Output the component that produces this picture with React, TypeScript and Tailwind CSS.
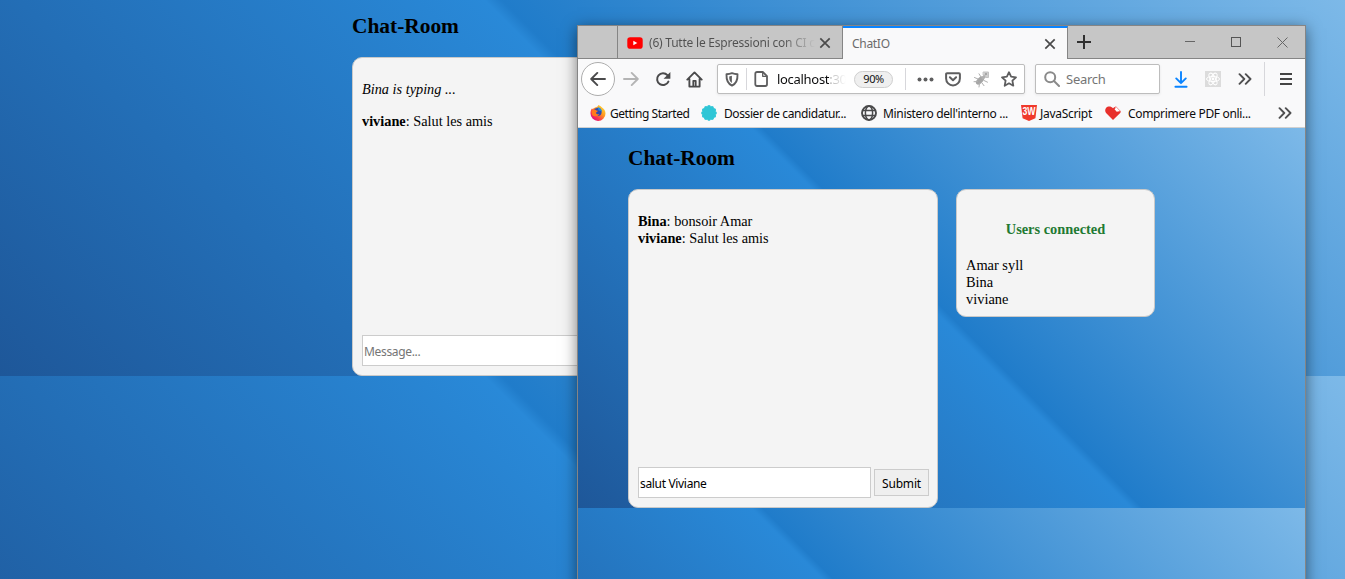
import React from "react";

const GRADIENT =
  "bg-[linear-gradient(45deg,#1e5799_0%,#2989d8_50%,#207cca_51%,#7db9e8_100%)]";

const UI = "font-['Noto_Sans','Open_Sans',sans-serif]";

function CloseIcon() {
  return (
    <svg width="12" height="12" viewBox="0 0 12 12" fill="none" stroke="#4a4a4a" strokeWidth="1.7">
      <path d="M1.3 1.3l9.4 9.4M10.7 1.3L1.3 10.7" />
    </svg>
  );
}

function YoutubeIcon() {
  return (
    <svg width="16" height="12" viewBox="0 0 16 12">
      <rect x="0.3" y="0.3" width="15.4" height="11.4" rx="2.8" fill="#f00" />
      <path d="M6.3 3.8v4.400L10.300 6z" fill="#fff" />
    </svg>
  );
}

function BackIcon() {
  return (
    <svg width="16" height="16" viewBox="0 0 16 16" fill="none" stroke="#4a4a4b" strokeWidth="1.9" strokeLinecap="round" strokeLinejoin="round">
      <path d="M15 8H1.4M7.3 1.9L1.2 8l6.1 6.1" />
    </svg>
  );
}

function ForwardIcon() {
  return (
    <svg width="16" height="16" viewBox="0 0 16 16" fill="none" stroke="#b4b4b4" strokeWidth="1.9" strokeLinecap="round" strokeLinejoin="round">
      <path d="M1 8h13.6M8.7 1.9L14.8 8l-6.1 6.1" />
    </svg>
  );
}

function ReloadIcon() {
  return (
    <svg width="16" height="16" viewBox="0 0 16 16">
      <path d="M12.4 4.2A5.9 5.9 0 1 0 13.4 10.6" fill="none" stroke="#4a4a4b" strokeWidth="2" strokeLinecap="round" />
      <path d="M15.4 1v6.2a.6.6 0 0 1-.6.6H8.6z" fill="#4a4a4b" />
    </svg>
  );
}

function HomeIcon() {
  return (
    <svg width="17" height="17" viewBox="0 0 17 17" fill="none" stroke="#4a4a4b" strokeWidth="1.9" strokeLinecap="round" strokeLinejoin="round">
      <path d="M1.3 8.6L8.5 1.4l7.2 7.2M3.4 8v7.6h10.2V8" />
      <path d="M7.3 15.2V9.8h2.4v5.4" strokeWidth="1.8" />
    </svg>
  );
}

function ShieldIcon() {
  return (
    <svg width="14" height="15" viewBox="0 0 14 15">
      <path d="M7 1.2C5 1.9 3 2.2 1.5 2.3c-.2 4.500 .1 8.900 5.500 11.300 5.400-2.400 5.700-6.800 5.500-11.300C11 2.200 9 1.900 7 1.200z" fill="none" stroke="#5e5e5f" strokeWidth="1.9" strokeLinejoin="round" />
      <path d="M6.900 3.800v7.200C4.500 9.500 4.200 7.400 4.200 4.500z" fill="#5e5e5f" />
    </svg>
  );
}

function PageIcon() {
  return (
    <svg width="14" height="16" viewBox="0 0 14 16" fill="none" stroke="#5e5e5f" strokeWidth="1.8" strokeLinejoin="round">
      <path d="M3 1h5.800L13 5.200V13.300a1.700 1.700 0 0 1-1.700 1.700H3a1.700 1.700 0 0 1-1.700-1.700V2.700A1.700 1.700 0 0 1 3 1z" />
      <path d="M8.700 1.200v4.100h4.100" strokeWidth="1.300" />
    </svg>
  );
}

function DotsIcon() {
  return (
    <svg width="17" height="5" viewBox="0 0 17 5" fill="#5e5e5f">
      <circle cx="2.500" cy="2.500" r="2" />
      <circle cx="8.500" cy="2.500" r="2" />
      <circle cx="14.500" cy="2.500" r="2" />
    </svg>
  );
}

function PocketIcon() {
  return (
    <svg width="16" height="15" viewBox="0 0 16 15" fill="none" stroke="#5e5e5f" strokeWidth="2" strokeLinecap="round" strokeLinejoin="round">
      <path d="M2 1.300h12a.9.900 0 0 1 .9.900V6.500a6.900 6.900 0 0 1-13.800 0V2.200A.9.900 0 0 1 2 1.300z" />
      <path d="M4.900 5.300L8 8.300l3.100-3" />
    </svg>
  );
}

function BugIcon() {
  return (
    <svg width="17" height="17" viewBox="0 0 17 17" fill="none" stroke="#b0b0b0" strokeLinecap="round">
      <ellipse cx="7" cy="9.500" rx="5" ry="2.800" transform="rotate(-45 7 9.500)" fill="#a6a6a6" stroke="none" />
      <path d="M10 7l2.500-3" strokeWidth="3" />
      <path d="M5 8L1.500 6.500M4.500 10.500L1 10.700M8 6L6 2.800M9 12l2 2.700M11 9.500l3.500 1.700M6.500 12.500L6 16" strokeWidth="1" />
      <path d="M10.500 1h5v5.500h-3V4h-2z" fill="#cfcfcf" stroke="#c2c2c2" strokeWidth="1" />
      <path d="M12.500 3h1" stroke="#777" strokeWidth="1" />
    </svg>
  );
}

function StarIcon() {
  return (
    <svg width="16" height="16" viewBox="0 0 16 16" fill="none" stroke="#5e5e5f" strokeWidth="1.800" strokeLinejoin="round">
      <path d="M8 1.200l2.100 4.500 4.900.6-3.600 3.400.9 5L8 12.300 3.700 14.700l.9-5L1 6.300l4.900-.6z" />
    </svg>
  );
}

function SearchIcon() {
  return (
    <svg width="16" height="16" viewBox="0 0 16 16" fill="none" stroke="#8a8a8a" strokeWidth="2" strokeLinecap="round">
      <circle cx="6.200" cy="6.200" r="5" />
      <path d="M10 10l5 5" />
    </svg>
  );
}

function DownloadIcon() {
  return (
    <svg width="14" height="17" viewBox="0 0 14 17" fill="none" stroke="#0a84ff" strokeWidth="1.900" strokeLinecap="round" strokeLinejoin="round">
      <path d="M7 1v11M2.200 7.400L7 12.200l4.800-4.800M1.400 15.700h11.200" />
    </svg>
  );
}

function ReactBadge() {
  return (
    <svg width="16" height="16" viewBox="0 0 16 16">
      <rect width="16" height="16" fill="#dcdcdc" />
      <g fill="none" stroke="#fff" strokeWidth="1">
        <ellipse cx="8" cy="8" rx="6.500" ry="2.600" />
        <ellipse cx="8" cy="8" rx="6.500" ry="2.600" transform="rotate(60 8 8)" />
        <ellipse cx="8" cy="8" rx="6.500" ry="2.600" transform="rotate(120 8 8)" />
      </g>
      <circle cx="8" cy="8" r="1.400" fill="#fff" />
    </svg>
  );
}

function ChevronsIcon() {
  return (
    <svg width="14" height="12" viewBox="0 0 14 12" fill="none" stroke="#4f4f50" strokeWidth="1.900" strokeLinecap="round" strokeLinejoin="round">
      <path d="M1.500 1.200L6.300 6l-4.800 4.800M7.700 1.200L12.500 6l-4.800 4.800" />
    </svg>
  );
}

function MenuIcon() {
  return (
    <svg width="12" height="12" viewBox="0 0 12 12" fill="#444">
      <rect width="12" height="2" />
      <rect y="5" width="12" height="2" />
      <rect y="10" width="12" height="2" />
    </svg>
  );
}

function FirefoxIcon() {
  return (
    <svg width="16" height="16" viewBox="0 0 16 16">
      <defs>
        <linearGradient id="fox" x1="0.9" y1="0.1" x2="0.2" y2="0.9">
          <stop offset="0" stopColor="#ffd93b" />
          <stop offset="0.4" stopColor="#ff9a1f" />
          <stop offset="0.75" stopColor="#fb3d4a" />
          <stop offset="1" stopColor="#e0107c" />
        </linearGradient>
      </defs>
      <path d="M8.500 0c1.500 .8 2.900 1.700 3.800 2.800 1.700 1 3.200 3.200 3.200 5.600A7.500 7.500 0 0 1 .5 8.500C.4 6.400 1 4.500 2.100 3.200l.4 1C4 2.400 6.500 2.500 7.500 1.500z" fill="url(#fox)" />
      <circle cx="7.600" cy="7" r="4" fill="#2f49b0" />
      <path d="M7.500 2c3 .5 4.500 2.500 4.300 5.300-.8-1.500-2-1.800-3-1.500z" fill="#1f8fe0" />
      <path d="M1.600 6.500c1.500-2.300 3.600-2.300 4.700-1l1.500.3c-.2 1.200-1.500 1.200-1.800 1.900 0 1.300 1.700 2 3.300 1.200-1 2.600-5.500 3.300-7.200 .8z" fill="#ff7a1c" />
    </svg>
  );
}

function GearBadge() {
  const teeth = Array.from({ length: 12 }, (_, i) => {
    const a = (i * Math.PI) / 6;
    return [8 + 6.100 * Math.cos(a), 8 + 6.100 * Math.sin(a)];
  });
  return (
    <svg width="16" height="16" viewBox="0 0 16 16" fill="#2fc6d6">
      <circle cx="8" cy="8" r="6.800" />
      {teeth.map(([x, y], i) => (
        <circle key={i} cx={x} cy={y} r="1.800" />
      ))}
    </svg>
  );
}

function GlobeIcon() {
  return (
    <svg width="16" height="16" viewBox="0 0 16 16" fill="none" stroke="#4a4a4b" strokeWidth="1.500">
      <circle cx="8" cy="8" r="7" strokeWidth="1.900" />
      <ellipse cx="8" cy="8" rx="3.600" ry="7" />
      <path d="M1.500 5.500h13M1.500 10.500h13" />
    </svg>
  );
}

function W3Icon() {
  return (
    <svg width="16" height="16" viewBox="0 0 16 16">
      <path d="M0 0h16l-1.600 13.300L8 16l-6.400-2.700z" fill="#f0392b" />
      <text x="8" y="9.800" textAnchor="middle" textLength="13" lengthAdjust="spacingAndGlyphs" fontFamily="Liberation Sans" fontWeight="bold" fontSize="11" fill="#fff">3W</text>
    </svg>
  );
}

function HeartIcon() {
  return (
    <svg width="16" height="14" viewBox="0 0 16 14">
      <path d="M8 14L1.300 7.300C-.8 5 .2 1.200 3.300.5 5 .1 6.700.8 8 2.200L9.500 1 L15.700 5.600c0 .9-.4 1.500-1 2z" fill="#e8302c" />
      <path d="M10.800.5l4.700 4.800-3.800 .8-2.200-2.600z" fill="#fff" stroke="#e8302c" strokeWidth=".5" />
    </svg>
  );
}

function TabStrip() {
  return (
    <div className="flex h-[33px] bg-[#c6c6c6] text-[12px]">
      <div className="w-[39px] shrink-0 border-b border-[#858585]" />
      <div className="flex w-[226px] shrink-0 items-center border-x border-b border-[#858585] pt-px pl-[9px]">
        <YoutubeIcon />
        <span className="ml-[6px] w-[166px] shrink-0 bg-[linear-gradient(90deg,#505050_80%,transparent_100%)] bg-clip-text pt-px text-[12px] tracking-[-0.22px] whitespace-nowrap text-transparent">
          (6) Tutte le Espressioni con CI c
        </span>
        <span className="ml-[4px]"><CloseIcon /></span>
      </div>
      <div className="flex w-[225px] shrink-0 items-center justify-between border-t-2 border-r border-t-[#0a84ff] border-r-[#858585] bg-[#f9f9fa] pr-[11px] pl-[9px]">
        <span className="text-[12px] tracking-[-0.3px] text-[#6b6b6b]">ChatIO</span>
        <CloseIcon />
      </div>
      <div className="flex flex-1 items-center border-b border-[#858585] pl-[9px]">
        <svg width="14" height="14" viewBox="0 0 14 14" fill="none" stroke="#303030" strokeWidth="2">
          <path d="M7 0v14M0 7h14" />
        </svg>
        <div className="ml-[94px] flex flex-1 items-center gap-[36px]">
          <svg width="10" height="10" viewBox="0 0 10 10" stroke="#666"><path d="M0 4.500h10" /></svg>
          <svg width="10" height="10" viewBox="0 0 10 10" stroke="#555" fill="none"><rect x=".5" y=".5" width="9" height="9" /></svg>
          <svg width="11" height="11" viewBox="0 0 11 11" stroke="#666" fill="none"><path d="M.5 .5l10 10M10.500 .5l-10 10" /></svg>
        </div>
      </div>
    </div>
  );
}

function Toolbar() {
  return (
    <div className="flex h-[40px] items-center pl-[3px]">
      <div className="flex h-[34px] w-[34px] shrink-0 items-center justify-center rounded-full border border-[#adadad] bg-white">
        <BackIcon />
      </div>
      <div className="ml-[8px] flex items-center">
        <ForwardIcon />
        <span className="ml-[16px]"><ReloadIcon /></span>
        <span className="ml-[15px]"><HomeIcon /></span>
      </div>
      <div className="ml-[14px] flex h-[30px] w-[308px] shrink-0 items-center rounded-[2px] border border-[#bdbdbd] bg-white pl-[7px] shadow-[0_1px_3px_rgba(0,0,0,0.08)]">
        <ShieldIcon />
        <div className="ml-[7px] h-[22px] w-px bg-[#d7d7db]" />
        <span className="ml-[7px]"><PageIcon /></span>
        <span className="ml-[9px] w-[69px] shrink-0 bg-[linear-gradient(90deg,#0c0c0d_0_52px,#aaa_52px,transparent_100%)] bg-clip-text pt-[2px] text-[13px] tracking-[-0.3px] whitespace-nowrap text-transparent">
          localhost:30
        </span>
        <div className="ml-[8px] flex h-[17px] w-[39px] shrink-0 items-center justify-center rounded-full border border-[#cfcfcf] bg-[#efefef] pt-px text-[11px] tracking-[-0.4px] text-[#111]">
          90%
        </div>
        <div className="ml-[12px] h-[22px] w-px bg-[#d7d7db]" />
        <span className="ml-[11px]"><DotsIcon /></span>
        <span className="ml-[11px]"><PocketIcon /></span>
        <span className="ml-[12px]"><BugIcon /></span>
        <span className="ml-[11px]"><StarIcon /></span>
      </div>
      <div className="ml-[10px] flex h-[30px] w-[125px] shrink-0 items-center rounded-[2px] border border-[#bdbdbd] bg-white pl-[8px] shadow-[0_1px_3px_rgba(0,0,0,0.08)]">
        <SearchIcon />
        <span className="ml-[6px] pt-[2px] text-[13px] tracking-[-0.25px] text-[#757575]">Search</span>
      </div>
      <span className="ml-[14px]"><DownloadIcon /></span>
      <span className="ml-[17px]"><ReactBadge /></span>
      <span className="ml-[17px]"><ChevronsIcon /></span>
      <div className="ml-[12px] h-[34px] w-px bg-[#d7d7db]" />
      <span className="ml-[15px]"><MenuIcon /></span>
    </div>
  );
}

function Bookmarks() {
  return (
    <div className="flex h-[29px] items-center border-b border-[#d0d0d0] pl-[12px] text-[12px] whitespace-nowrap text-[#0c0c0d]">
      <FirefoxIcon />
      <span className="ml-[4px] w-[91px] pt-[2px] tracking-[-0.46px]">Getting Started</span>
      <GearBadge />
      <span className="ml-[7px] w-[137px] pt-[2px] tracking-[-0.4px]">Dossier de candidatur...</span>
      <GlobeIcon />
      <span className="ml-[6px] w-[138px] pt-[2px] tracking-[-0.33px]">Ministero dell'interno ...</span>
      <W3Icon />
      <span className="ml-[3px] w-[65px] pt-[2px] tracking-[-0.3px]">JavaScript</span>
      <HeartIcon />
      <span className="ml-[7px] w-[150px] pt-[2px] tracking-[-0.33px]">Comprimere PDF onli...</span>
      <ChevronsIcon />
    </div>
  );
}

function Title() {
  return <h2 className="text-[21.400px] leading-[24px] font-bold text-black">Chat-Room</h2>;
}

function Message({ who, text }: { who: string; text: string }) {
  return (
    <p>
      <b>{who}</b>: {text}
    </p>
  );
}

function ChatPanel({ children, draft }: { children: React.ReactNode; draft?: string }) {
  return (
    <div className="flex h-[319px] w-[310px] flex-col rounded-[10px] border border-[#c9c9c9] bg-[#f4f4f4] pr-[8px] pb-[9px] pl-[9px] text-[14.300px] leading-[17px] text-black">
      <div className="flex-1">{children}</div>
      <div className={"flex items-center gap-[3px] " + UI}>
        <input
          className="h-[31px] w-[233px] border border-[#ccc] bg-white pt-[2px] pr-px pl-[1px] text-[12px] tracking-[-0.33px] text-black placeholder:text-[#757575]"
          placeholder="Message..."
          defaultValue={draft}
        />
        <button className="h-[27px] w-[55px] border border-[#ccc] bg-[#efefef] pt-[2px] text-[12px] tracking-[-0.2px] text-black">Submit</button>
      </div>
    </div>
  );
}

function BrowserWindow() {
  return (
    <div className="absolute top-[25px] left-[577px] h-[600px] w-[729px] border border-[#858585] shadow-[0_3px_14px_rgba(0,0,0,0.5)]">
      <div className={"bg-[#f9f9fa] " + UI}>
        <TabStrip />
        <Toolbar />
        <Bookmarks />
      </div>
      <div className={"h-[498px] bg-[length:100%_380px] pt-[18px] pl-[50px] " + GRADIENT}>
        <Title />
        <div className="mt-[19px] flex items-start gap-[18px]">
          <ChatPanel draft="salut Viviane">
            <div className="pt-[23px]">
              <Message who="Bina" text="bonsoir Amar" />
              <Message who="viviane" text="Salut les amis" />
            </div>
          </ChatPanel>
          <div className="h-[128px] w-[199px] rounded-[10px] border border-[#c9c9c9] bg-[#f4f4f4] px-[9px] pt-[31px] text-[14.400px] leading-[17px] text-black">
            <h4 className="mb-[19px] text-center font-bold text-[#1f7a33]">Users connected</h4>
            <p>Amar syll</p>
            <p>Bina</p>
            <p>viviane</p>
          </div>
        </div>
      </div>
    </div>
  );
}

export default function App() {
  return (
    <div className={"relative h-[579px] w-[1345px] overflow-hidden bg-[length:100%_376px] font-['Liberation_Serif',serif] " + GRADIENT}>
      <div className="pt-[14px] pl-[352px]">
        <Title />
        <div className="mt-[19px]">
          <ChatPanel>
            <p className="pt-[23px] pb-[15px] italic">Bina is typing ...</p>
            <Message who="viviane" text="Salut les amis" />
          </ChatPanel>
        </div>
      </div>
      <BrowserWindow />
    </div>
  );
}
